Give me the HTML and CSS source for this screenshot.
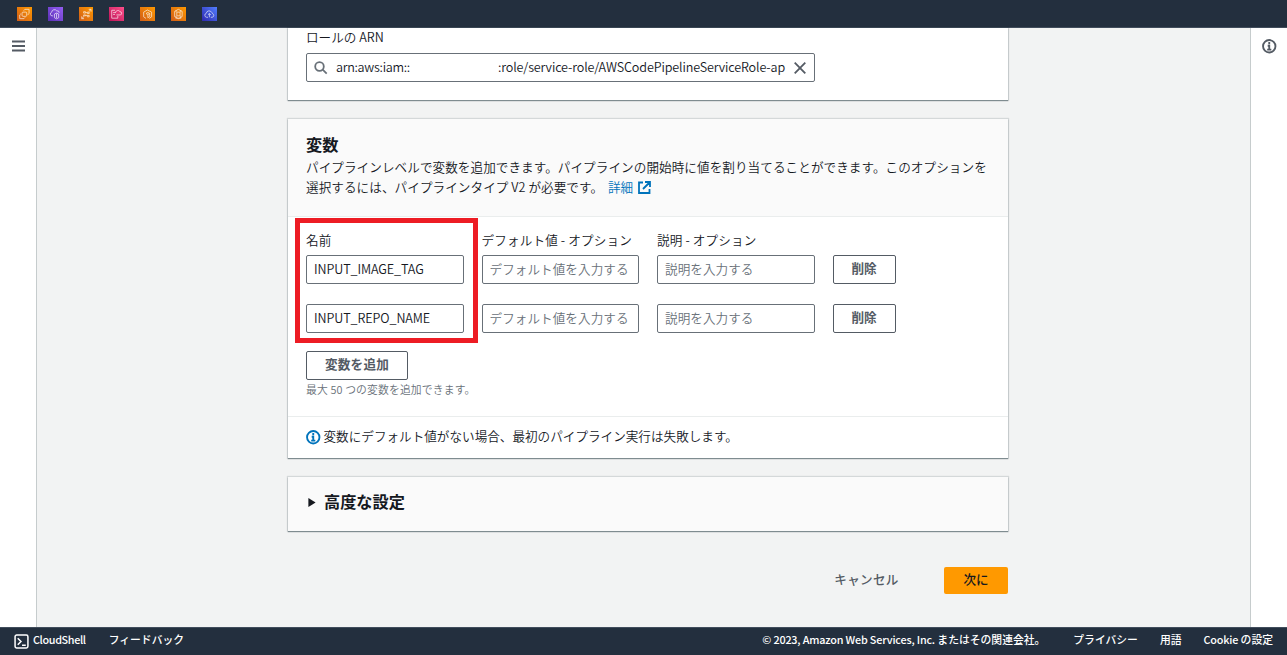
FILE: index.html
```html
<!DOCTYPE html>
<html lang="ja">
<head>
  <meta charset="UTF-8" />
  <meta name="viewport" content="width=device-width, initial-scale=1.0"/>
  <title>CodePipeline</title>
  <link rel="stylesheet" href="styles.css">
</head>
<body>
  <!-- Service shortcuts -->
  <header class="topbar">
    <span class="service orange"><svg viewBox="0 0 15 15"><rect x="5" y="5.500" width="5" height="4.500" rx="1"/><path d="M7 4V3.500l1-1h4.500v4.500l-1 1H11M4 7.500H3.500l-1 1v4h4.500l1-1V11"/></svg></span>
    <span class="service purple"><svg viewBox="0 0 15 15"><path d="M5 9.500H4a2 2 0 0 1-.5-3.900A3 3 0 0 1 9 4.200a2 2 0 0 1 2.500 2M6.500 7.500l2.200-1 2.300 1v4l-2.300 1.200-2.200-1.200zM8.700 7v5"/></svg></span>
    <span class="service orange"><svg viewBox="0 0 15 15"><path d="M2.500 12.500l2.500-2.500M10 5l2.500-2.500M10 2.500h2.500V5M2.500 10v2.500H5M4.500 5h2v1.500h-2zM8.500 5.500h2v1.500h-2zM4.500 8.500h2v1h-2zM8.500 9h2v1.500h-2zM6.500 6h2M6.500 9h2"/></svg></span>
    <span class="service pink"><svg viewBox="0 0 15 15"><path d="M6 3.500H2.500v8.500h6.500V9.500M4 6h2M4 8h2M6.500 6.500A2 2 0 0 1 8 4.200a2 2 0 0 1 3.200.8 1.700 1.700 0 0 1 .3 3.500H7.500"/></svg></span>
    <span class="service orange"><svg viewBox="0 0 15 15"><path d="M6 12.200L3.500 10.500v-5L7.500 3.200l4.500 2.300v5l-2.500 1.700M6 7l2-1.200L10 7v3.200l-2 1.300M8 8v3.500M6 7l2 1 2-1"/></svg></span>
    <span class="service orange"><svg viewBox="0 0 15 15"><path d="M7.500 2.500l4 2.200v5.600l-4 2.200-4-2.200V4.700zM5.800 5.500h3.500v4h-3.500zM4.500 12h6M5 3.500v2M10 3.500v2M5 9.500v2M10 9.500v2"/></svg></span>
    <span class="service blue"><svg viewBox="0 0 15 15"><path d="M6 11H4.500a2.200 2.200 0 0 1-.3-4.300 3 3 0 0 1 5.600-1 2 2 0 0 1 1.200 1.500 2 2 0 0 1-.5 3.800H9M7.500 11V7M6 8.300L7.500 7 9 8.300"/></svg></span>
  </header>

  <div class="layout">
    <aside class="rail rail-left">
      <svg class="menu-icon" viewBox="0 0 13 12"><path d="M0 1.500h13M0 6h13M0 10.500h13"/></svg>
    </aside>

    <main class="content">
      <section class="card role-card">
        <label class="label">ロールの ARN</label>
        <div class="search-input">
          <svg class="search-icon" viewBox="0 0 14 14"><circle cx="5.500" cy="5.500" r="4.300"/><path d="M8.700 8.700l4 4"/></svg>
          <div class="arn"><span class="arn-start">arn:aws:iam::</span><span class="arn-end">:role/service-role/AWSCodePipelineServiceRole-ap</span></div>
          <svg class="close-icon" viewBox="0 0 12 12"><path d="M.7.7l10.600 10.600M11.300.7L.7 11.300"/></svg>
        </div>
      </section>

      <section class="card variables-card">
        <div class="card-header">
          <h2>変数</h2>
          <p>パイプラインレベルで変数を追加できます。パイプラインの開始時に値を割り当てることができます。このオプションを<br>選択するには、パイプラインタイプ V2 が必要です。 <a class="link" href="#">詳細<svg class="external-icon" viewBox="0 0 13 13"><path d="M5 1.500H1v10.500h10.500V8M7 1h5v5M12 1L5 8"/></svg></a></p>
        </div>

        <div class="card-body">
          <div class="variable-grid">
            <span class="label">名前</span>
            <span class="label">デフォルト値 - オプション</span>
            <span class="label">説明 - オプション</span>
            <span></span>

            <input type="text" value="INPUT_IMAGE_TAG">
            <input type="text" placeholder="デフォルト値を入力する">
            <input type="text" placeholder="説明を入力する">
            <button class="btn">削除</button>

            <input class="second" type="text" value="INPUT_REPO_NAME">
            <input class="second" type="text" placeholder="デフォルト値を入力する">
            <input class="second" type="text" placeholder="説明を入力する">
            <button class="btn second">削除</button>
          </div>
          <button class="btn add-btn">変数を追加</button>
          <p class="hint">最大 50 つの変数を追加できます。</p>
          <div class="highlight"></div>
        </div>

        <div class="card-footer">
          <svg class="info-icon blue-info" viewBox="0 0 14 14"><circle cx="7" cy="7" r="6"/><path d="M7 3v2M5.500 6.500H7V10M5 10.200h4"/></svg>
          <span>変数にデフォルト値がない場合、最初のパイプライン実行は失敗します。</span>
        </div>
      </section>

      <section class="card advanced-card">
        <svg class="caret" viewBox="0 0 8 10"><path d="M0 0l8 5-8 5z"/></svg>
        <h2>高度な設定</h2>
      </section>

      <div class="actions">
        <button class="cancel-btn">キャンセル</button>
        <button class="next-btn">次に</button>
      </div>
    </main>

    <aside class="rail rail-right">
      <svg class="info-icon" viewBox="0 0 14 14"><circle cx="7" cy="7" r="6"/><path d="M7 3v2M5.500 6.500H7V10M5 10.200h4"/></svg>
    </aside>
  </div>

  <footer class="footer">
    <svg class="shell-icon" viewBox="0 0 14 14"><rect x="1" y="1" width="12" height="12" rx="1.500"/><path d="M3.500 4l3 3-3 3M7.500 10.500h3.500"/></svg>
    <span class="shell">CloudShell</span>
    <span class="feedback">フィードバック</span>
    <span class="copyright"><span class="latin">© 2023, Amazon Web Services, Inc.</span> またはその関連会社。</span>
    <span class="privacy">プライバシー</span>
    <span class="terms">用語</span>
    <span class="cookie"><span class="latin">Cookie</span> の設定</span>
  </footer>
</body>
</html>
```
FILE: styles.css
```css
* {
  box-sizing: border-box;
}
body {
  margin: 0;
  height: 655px;
  display: flex;
  flex-direction: column;
  overflow: hidden;
  background-color: #f2f3f3;
  color: #16191f;
  font-family: "Noto Sans CJK JP", sans-serif;
  font-size: 12.6px;
  font-weight: 350;
  line-height: 20px;
}
h2, p {
  margin: 0;
}
h2 {
  font-size: 16.2px;
  font-weight: 700;
  line-height: 20px;
}
svg {
  display: block;
  flex: none;
  fill: none;
  stroke: currentColor;
}
input, button {
  font: inherit;
  margin: 0;
}

/* top bar */
.topbar {
  flex: none;
  height: 28px;
  display: flex;
  align-items: center;
  gap: 16px;
  padding-left: 17px;
  background-color: #232f3e;
  border-bottom: 1px solid #414d5c;
}
.service {
  width: 14.8px;
  height: 14px;
  color: #fff;
}
.service svg {
  width: 100%;
  height: 100%;
  opacity: 0.75;
  stroke-width: 0.9;
}
.orange {
  background: linear-gradient(45deg, #d05c17, #f90);
}
.purple {
  background: linear-gradient(45deg, #5a30b5, #945df2);
}
.pink {
  background: linear-gradient(45deg, #bc1356, #ff4f8b);
}
.blue {
  background: linear-gradient(45deg, #2e27ad, #527fff);
}

/* page */
.layout {
  flex: 1;
  min-height: 0;
  display: flex;
}
.rail {
  flex: none;
  width: 37px;
  background-color: #fff;
  color: #545b64;
}
.rail-left {
  border-right: 1px solid #c6cccd;
  padding: 12px 0 0 12px;
}
.rail-right {
  border-left: 1px solid #c6cccd;
  padding: 11px 0 0 11px;
}
.menu-icon {
  width: 13px;
  height: 12px;
  stroke-width: 1.9;
}
.info-icon {
  width: 14.500px;
  height: 14.500px;
  stroke-width: 1.8;
}
.content {
  flex: 1;
  padding-left: 251px;
}

/* cards */
.card {
  width: 720px;
  background-color: #fff;
  box-shadow: 0 1px 1px 0 rgba(0, 28, 36, 0.4), 0 0 1px 1px rgba(0, 28, 36, 0.12);
}
.role-card {
  height: 72px;
  padding: 0 18px;
}
.role-card .label {
  height: 25px;
  line-height: 18px;
}
.label {
  display: block;
  line-height: 20px;
}
.search-input {
  width: 509px;
  height: 29px;
  padding: 0 7px;
  display: flex;
  align-items: center;
  border: 1px solid #687078;
  border-radius: 2px;
}
.search-icon {
  width: 14px;
  height: 14px;
  color: #687078;
  stroke-width: 1.8;
}
.arn {
  display: flex;
  width: 450px;
  margin-left: 8px;
  padding-bottom: 2px;
  overflow: hidden;
  white-space: nowrap;
  letter-spacing: -0.14px;
}
.arn-start {
  width: 162px;
  flex: none;
  letter-spacing: -0.3px;
}
.close-icon {
  width: 12px;
  height: 12px;
  margin-left: 8px;
  color: #545b64;
  stroke-width: 1.8;
}
.variables-card {
  margin-top: 19px;
}
.card-header {
  height: 98px;
  padding: 15px 18px 0;
  background-color: #fafafa;
  border-bottom: 1px solid #eaeded;
}
.card-header p {
  margin-top: 3px;
  letter-spacing: 0.06px;
  white-space: nowrap;
}
.link {
  margin-left: 2px;
  color: #0073bb;
  text-decoration: none;
}
.external-icon {
  display: inline-block;
  width: 13px;
  height: 13px;
  margin-left: 5px;
  vertical-align: -2px;
  stroke-width: 1.8;
}
.card-body {
  position: relative;
  height: 200px;
  padding: 13px 18px 0;
  border-bottom: 1px solid #eaeded;
}
.variable-grid {
  display: grid;
  grid-template-columns: 157.500px 157.500px 157.500px 63px;
  column-gap: 18px;
}
.variable-grid .label {
  height: 25px;
  letter-spacing: 0.14px;
  white-space: nowrap;
}
input {
  width: 100%;
  height: 29px;
  padding: 0 7px 2px;
  color: #16191f;
  background-color: #fff;
  border: 1px solid #687078;
  border-radius: 2px;
  letter-spacing: -0.1px;
}
input::placeholder {
  color: #687078;
  letter-spacing: 0.05px;
  opacity: 1;
}
.btn {
  height: 29px;
  padding: 0 0 3px;
  color: #545b64;
  background-color: #fff;
  border: 1px solid #545b64;
  border-radius: 2px;
  font-weight: 700;
}
.second {
  margin-top: 20px;
}
.add-btn {
  display: block;
  width: 102px;
  margin-top: 18px;
  padding-bottom: 4px;
  letter-spacing: 0.2px;
}
.hint {
  margin-top: -1px;
  color: #687078;
  font-size: 10.8px;
  letter-spacing: 0.15px;
}
/* marks the name column */
.highlight {
  position: absolute;
  left: 7px;
  top: 1px;
  width: 183px;
  height: 125px;
  border: 5px solid #ed1c24;
}
.card-footer {
  height: 41px;
  padding: 0 18px;
  display: flex;
  align-items: center;
  gap: 3px;
}
.card-footer span {
  padding-bottom: 3px;
}
.blue-info {
  color: #0073bb;
}
.advanced-card {
  height: 54px;
  margin-top: 19px;
  padding: 0 20px 3px;
  display: flex;
  align-items: center;
  gap: 8px;
  background-color: #fafafa;
}
.advanced-card h2 {
  padding-bottom: 3px;
}
.caret {
  width: 8px;
  height: 9px;
  fill: #16191f;
  stroke: none;
}
.actions {
  width: 720px;
  margin-top: 36px;
  display: flex;
  justify-content: flex-end;
  gap: 27px;
}
.cancel-btn, .next-btn {
  height: 27px;
  padding: 0 0 4px;
  border: none;
  border-radius: 2px;
  font-weight: 500;
}
.cancel-btn {
  width: 101px;
  background: none;
  color: #545b64;
  letter-spacing: 0.3px;
}
.next-btn {
  width: 64px;
  background-color: #f90;
  color: #16191f;
}

/* footer */
.footer {
  flex: none;
  height: 28px;
  padding: 0 14px;
  display: flex;
  align-items: center;
  background-color: #232f3e;
  border-top: 1px solid #414d5c;
  color: #fff;
  font-size: 10.8px;
  font-weight: 500;
  white-space: nowrap;
}
.footer > span {
  padding-bottom: 5px;
}
.latin {
  letter-spacing: -0.17px;
}
.shell-icon {
  width: 15px;
  height: 15px;
  stroke-width: 1.4;
}
.shell {
  margin-left: 4px;
  letter-spacing: -0.35px;
}
.feedback {
  margin-left: 23px;
}
.copyright {
  margin-left: auto;
}
.privacy {
  margin-left: 28px;
}
.terms, .cookie {
  margin-left: 22px;
}
```
